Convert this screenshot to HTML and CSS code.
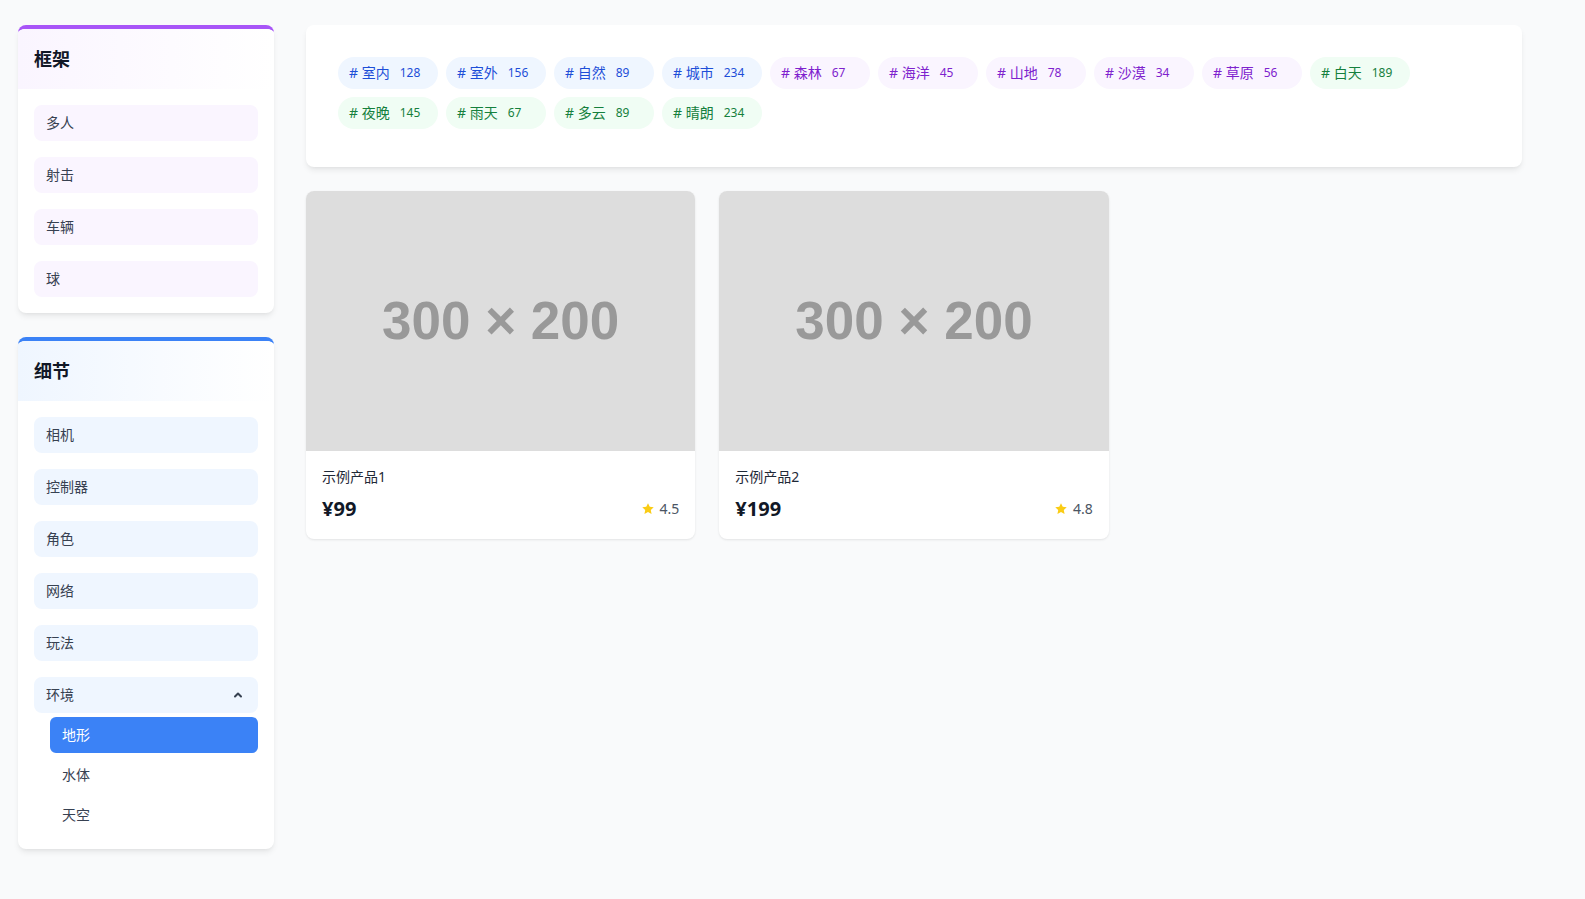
FILE: index.html
```html
<!DOCTYPE html>
<html lang="zh-CN">
<head>
<meta charset="utf-8">
<title>分类浏览</title>
<link rel="stylesheet" href="styles.css">
</head>
<body>
<div class="layout">
  <aside class="sidebar">
    <section class="panel panel-purple">
      <h2 class="panel-title">框架</h2>
      <ul class="menu">
        <li class="menu-item">多人</li>
        <li class="menu-item">射击</li>
        <li class="menu-item">车辆</li>
        <li class="menu-item">球</li>
      </ul>
    </section>
    <section class="panel panel-blue">
      <h2 class="panel-title">细节</h2>
      <ul class="menu">
        <li class="menu-item">相机</li>
        <li class="menu-item">控制器</li>
        <li class="menu-item">角色</li>
        <li class="menu-item">网络</li>
        <li class="menu-item">玩法</li>
        <li class="menu-group">
          <div class="menu-item menu-toggle">
            <span>环境</span>
            <svg class="chevron" width="16" height="16" viewBox="0 0 16 16"><path d="M5 9.5 L8 6.5 L11 9.5" fill="none" stroke="#374151" stroke-width="2" stroke-linecap="round" stroke-linejoin="round"/></svg>
          </div>
          <ul class="submenu">
            <li class="sub-item active">地形</li>
            <li class="sub-item">水体</li>
            <li class="sub-item">天空</li>
          </ul>
        </li>
      </ul>
    </section>
  </aside>
  <main class="content">
    <section class="tag-card">
      <div class="tags">
        <span class="tag tag-blue"># 室内<span class="count">128</span></span>
        <span class="tag tag-blue"># 室外<span class="count">156</span></span>
        <span class="tag tag-blue"># 自然<span class="count">89</span></span>
        <span class="tag tag-blue"># 城市<span class="count">234</span></span>
        <span class="tag tag-purple"># 森林<span class="count">67</span></span>
        <span class="tag tag-purple"># 海洋<span class="count">45</span></span>
        <span class="tag tag-purple"># 山地<span class="count">78</span></span>
        <span class="tag tag-purple"># 沙漠<span class="count">34</span></span>
        <span class="tag tag-purple"># 草原<span class="count">56</span></span>
        <span class="tag tag-green"># 白天<span class="count">189</span></span>
        <span class="tag tag-green"># 夜晚<span class="count">145</span></span>
        <span class="tag tag-green"># 雨天<span class="count">67</span></span>
        <span class="tag tag-green"># 多云<span class="count">89</span></span>
        <span class="tag tag-green"># 晴朗<span class="count">234</span></span>
      </div>
    </section>
    <section class="products">
      <article class="product">
        <div class="thumb"><span class="thumb-text">300 × 200</span></div>
        <div class="product-info">
          <div class="product-name">示例产品1</div>
          <div class="product-row">
            <span class="price">¥99</span>
            <span class="rating"><svg class="star" width="14" height="14" viewBox="0 0 24 24"><path d="M12 2l3 6.2 6.8.9-5 4.7 1.3 6.8L12 17.3l-6.1 3.3 1.3-6.8-5-4.7 6.8-.9z" fill="#facc15"/></svg>4.5</span>
          </div>
        </div>
      </article>
      <article class="product">
        <div class="thumb"><span class="thumb-text">300 × 200</span></div>
        <div class="product-info">
          <div class="product-name">示例产品2</div>
          <div class="product-row">
            <span class="price">¥199</span>
            <span class="rating"><svg class="star" width="14" height="14" viewBox="0 0 24 24"><path d="M12 2l3 6.2 6.8.9-5 4.7 1.3 6.8L12 17.3l-6.1 3.3 1.3-6.8-5-4.7 6.8-.9z" fill="#facc15"/></svg>4.8</span>
          </div>
        </div>
      </article>
    </section>
  </main>
</div>
</body>
</html>
```

FILE: styles.css
```css
* { box-sizing: border-box; }
html, body { margin: 0; padding: 0; }
body {
  background: #f9fafb;
  font-family: "Noto Sans", "Noto Sans CJK SC", sans-serif;
  color: #1f2937;
}
ul { list-style: none; margin: 0; padding: 0; }
h2 { margin: 0; }

.layout {
  display: flex;
  gap: 32px;
  padding: 25px 63px 40px 18px;
  align-items: flex-start;
}

.sidebar {
  width: 256px;
  flex: none;
  display: flex;
  flex-direction: column;
  gap: 24px;
}

.panel {
  background: #fff;
  border-radius: 8px;
  border-top: 4px solid;
  overflow: hidden;
  box-shadow: 0 4px 6px -1px rgba(0,0,0,.08), 0 2px 4px -2px rgba(0,0,0,.06);
}
.panel-purple { border-top-color: #a855f7; }
.panel-blue { border-top-color: #3b82f6; }

.panel-title {
  padding: 16px;
  font-size: 18px;
  line-height: 28px;
  font-weight: 700;
  color: #111827;
}
.panel-purple .panel-title { background: linear-gradient(to right, #faf5ff, #ffffff); }
.panel-blue .panel-title { background: linear-gradient(to right, #eff6ff, #ffffff); }

.menu {
  padding: 16px;
  display: flex;
  flex-direction: column;
  gap: 16px;
}
.menu-item {
  padding: 8px 12px;
  font-size: 14px;
  line-height: 20px;
  color: #374151;
  border-radius: 8px;
}
.panel-purple .menu-item { background: #faf5ff; }
.panel-blue .menu-item { background: #eff6ff; }

.menu-toggle {
  display: flex;
  align-items: center;
  justify-content: space-between;
}
.chevron { display: block; }

.submenu {
  padding-left: 16px;
  display: flex;
  flex-direction: column;
  gap: 4px;
  margin-top: 4px;
}
.sub-item {
  padding: 8px 12px;
  font-size: 14px;
  line-height: 20px;
  color: #374151;
  border-radius: 6px;
}
.sub-item.active {
  background: #3b82f6;
  color: #fff;
}

.content {
  flex: 1;
  min-width: 0;
  display: flex;
  flex-direction: column;
  gap: 24px;
}

.tag-card {
  background: #fff;
  border-radius: 8px;
  padding: 32px 32px 38px;
  box-shadow: 0 4px 6px -1px rgba(0,0,0,.08), 0 2px 4px -2px rgba(0,0,0,.06);
}
.tags {
  display: flex;
  flex-wrap: wrap;
  gap: 8px;
}
.tag {
  width: 100px;
  height: 32px;
  padding: 0 11px;
  border-radius: 999px;
  display: inline-flex;
  align-items: center;
  font-size: 14px;
  line-height: 20px;
  white-space: nowrap;
}
.count {
  font-size: 12px;
  margin-left: 10px;
}
.tag-blue { background: #eff6ff; color: #1d4ed8; }
.tag-purple { background: #faf5ff; color: #7e22ce; }
.tag-green { background: #f0fdf4; color: #15803d; }

.products {
  display: grid;
  grid-template-columns: repeat(3, 1fr);
  gap: 24px;
}
.product {
  background: #fff;
  border-radius: 8px;
  overflow: hidden;
  box-shadow: 0 1px 3px rgba(0,0,0,.06), 0 1px 2px rgba(0,0,0,.04);
}
.thumb {
  aspect-ratio: 3 / 2;
  background: #dddddd;
  display: flex;
  align-items: center;
  justify-content: center;
}
.thumb-text {
  font-family: "Liberation Sans", Arial, sans-serif;
  font-size: 53px;
  font-weight: 700;
  color: #999999;
  line-height: 1;
}
.product-info {
  padding: 16px;
}
.product-name {
  font-size: 14px;
  line-height: 20px;
  color: #1f2937;
  margin-bottom: 8px;
}
.product-row {
  display: flex;
  align-items: center;
  justify-content: space-between;
}
.price {
  font-size: 20px;
  line-height: 28px;
  font-weight: 700;
  color: #111827;
}
.rating {
  display: inline-flex;
  align-items: center;
  gap: 5px;
  font-size: 14px;
  color: #4b5563;
}
.star { display: block; }
```
